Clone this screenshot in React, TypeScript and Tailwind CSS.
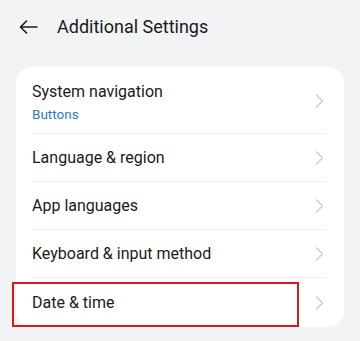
import React from "react";

function Chevron() {
  return (
    <svg width="9" height="15" viewBox="0 0 9 15" className="shrink-0">
      <path d="M1.5 1.5 L7.5 7.5 L1.5 13.5" fill="none" stroke="#c8c8ca" strokeWidth="1.2" strokeLinecap="round" strokeLinejoin="round" />
    </svg>
  );
}

function Row({ title, sub, last, highlight }: { title: string; sub?: string; last?: boolean; highlight?: boolean }) {
  return (
    <div className={`relative flex items-center pl-4 pr-[19px] ${sub ? "h-[67px]" : last ? "h-[49px]" : "h-[48px]"}`}>
      <div className={`flex flex-1 flex-col justify-center self-stretch ${last ? "" : "border-b border-[#efefef]"}`}>
        <div className={`flex items-center justify-between ${sub ? "pt-[4px]" : "h-full"}`}>
          <div className="flex flex-col">
            <span className="text-[16px] leading-[22px] text-[#1a1a1a]">{title}</span>
            {sub && <span className="mt-[2px] text-[13.5px] leading-[18px] text-[#2c7ad2]">{sub}</span>}
          </div>
        </div>
      </div>
      <div className="absolute right-[20px] top-1/2 -translate-y-1/2">
        <Chevron />
      </div>
      {highlight && (
        <div className="pointer-events-none absolute left-[-4px] top-[4px] h-[45px] w-[287px] border-2 border-[#d51c1c]" />
      )}
    </div>
  );
}

export default function App() {
  return (
    <div className="h-[341px] w-[360px] bg-[#f2f3f5]" style={{ fontFamily: "Roboto, 'Noto Sans', sans-serif" }}>
      <div className="flex h-[52px] items-center pl-[19px] pt-[1px]">
        <svg width="19" height="14" viewBox="0 0 19 14">
          <path d="M18 7 H1.5 M7.5 1 L1.5 7 L7.5 13" fill="none" stroke="#1a1a1a" strokeWidth="1.6" strokeLinecap="round" strokeLinejoin="round" />
        </svg>
        <span className="ml-[19px] text-[18px] leading-[24px] text-[#1a1a1a]">Additional Settings</span>
      </div>
      <div className="mx-4 mt-[15px] rounded-[16px] bg-white">
        <Row title="System navigation" sub="Buttons" />
        <Row title="Language & region" />
        <Row title="App languages" />
        <Row title="Keyboard & input method" />
        <Row title="Date & time" last highlight />
      </div>
    </div>
  );
}
